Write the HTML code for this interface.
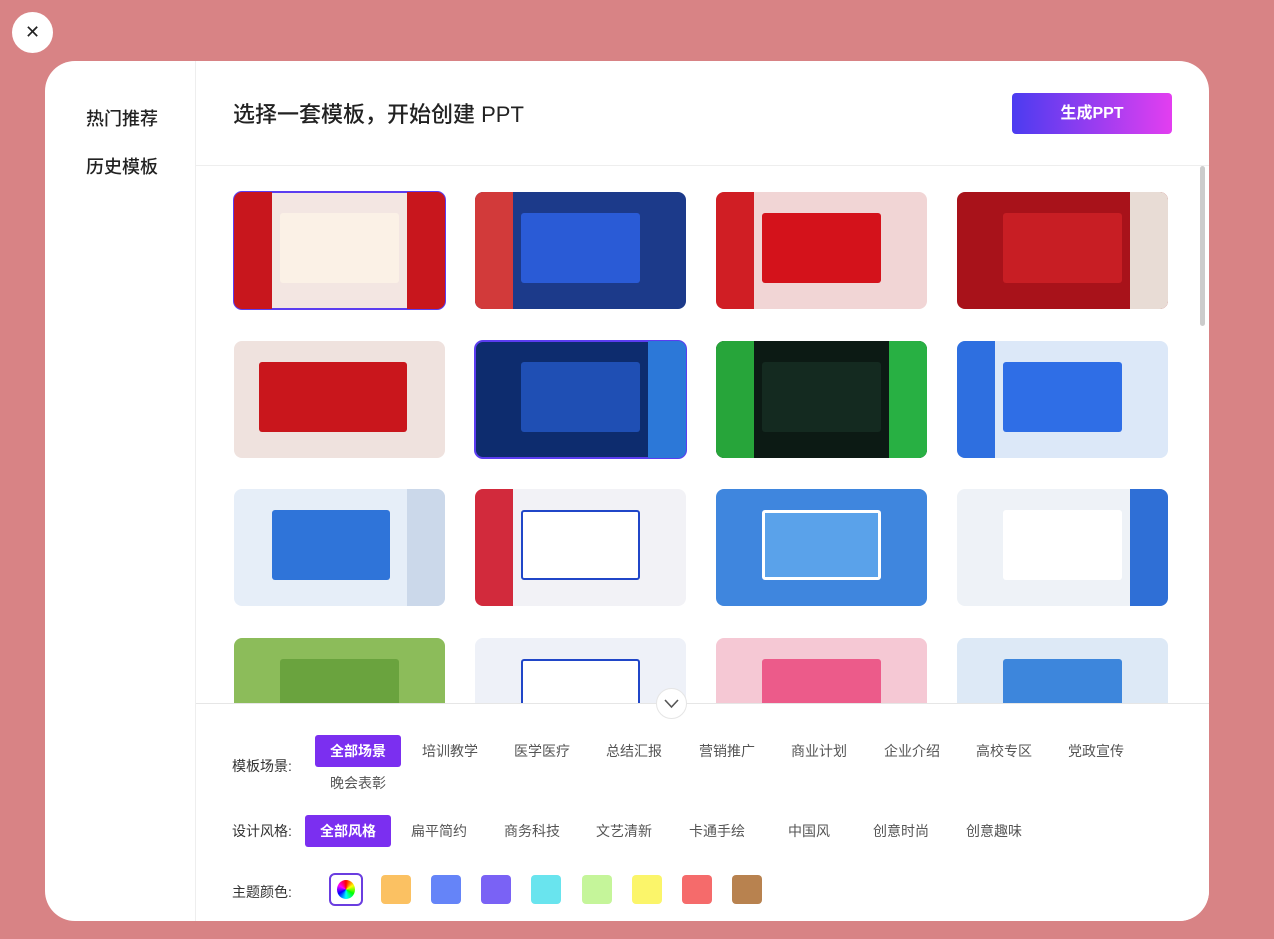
<!DOCTYPE html>
<html><head><meta charset="utf-8"><style>
*{margin:0;padding:0;box-sizing:border-box}
body{width:1274px;height:939px;background:#d88385;font-family:"Liberation Sans","Noto Sans CJK SC",sans-serif;position:relative;overflow:hidden}
.close{position:absolute;left:12px;top:12px;width:41px;height:41px;border-radius:50%;background:#fff;font-size:18px;text-align:center;line-height:41px;color:#222}
.modal{position:absolute;left:45px;top:61px;width:1164px;height:860px;background:#fff;border-radius:30px;overflow:hidden}
.side{position:absolute;left:0;top:0;width:151px;height:100%;border-right:1px solid #eee}
.side div{position:absolute;left:41px;font-size:18px;color:#222;font-weight:500}
.title{position:absolute;left:188px;top:36px;font-size:22px;color:#222;font-weight:500}
.btn{position:absolute;left:967px;top:32px;width:160px;height:41px;border-radius:4px;background:linear-gradient(90deg,#4b3cf0,#e33ef0);color:#fff;font-size:16px;font-weight:bold;text-align:center;line-height:41px}
.hr{position:absolute;left:151px;right:0;top:104px;border-top:1px solid #eee}
.grid{position:absolute;left:151px;top:105px;right:0;height:537px;overflow:hidden}
.t{position:absolute;width:211px;height:117px;border-radius:8px;overflow:hidden}
.t .c{position:absolute;left:22%;top:18%;width:56%;height:60%;border-radius:3px}
.t .s{position:absolute;left:0;top:0;width:18%;height:100%}
.t .s2{position:absolute;right:0;top:0;width:18%;height:100%}
.sel{outline:2px solid #5b3df0;outline-offset:-1px}
.scroll{position:absolute;left:1155px;top:105px;width:5px;height:160px;background:#ccc;border-radius:3px}
.panel{position:absolute;left:151px;top:642px;right:0;bottom:0;border-top:1px solid #e6e6e6;background:#fff}
.lbl{position:absolute;font-size:14px;color:#333}
.tag{position:absolute;font-size:14px;color:#555}
.on{background:#7b2ff0;color:#fff;border-radius:3px;text-align:center;font-weight:bold}
.sw{position:absolute;top:814px;width:30px;height:29px;border-radius:4px}
.down{position:absolute;left:656px;top:688px;width:31px;height:31px;border-radius:50%;background:#fff;border:1px solid #e5e5e5;z-index:3}
</style></head><body>
<div class="close">✕</div>
<div class="modal">
<div class="side"><div style="top:44px">热门推荐</div><div style="top:92px">历史模板</div></div>
<div class="title">选择一套模板，开始创建 PPT</div>
<div class="btn">生成PPT</div>
<div class="hr"></div>
<div class="grid">
<div class="t sel" style="left:38px;top:26px;background:#f3e6e2"><div class="s" style="background:#c8161d"></div><div class="s2" style="background:#c8161d"></div><div class="c" style="background:#fbf1e6"></div></div>
<div class="t" style="left:279px;top:26px;background:#1c3a8a"><div class="s" style="background:#d23a3a"></div><div class="c" style="background:#2a5bd6"></div></div>
<div class="t" style="left:520px;top:26px;background:#f1d5d5"><div class="s" style="background:#d01e24"></div><div class="c" style="background:#d4121b"></div></div>
<div class="t" style="left:761px;top:26px;background:#a8121a"><div class="c" style="background:#c81e24"></div><div class="s2" style="background:#e8dcd5"></div></div>
<div class="t" style="left:38px;top:175px;background:#efe2de"><div class="c" style="left:12%;width:70%;background:#c9161c"></div></div>
<div class="t sel" style="left:279px;top:175px;background:#0d2c6e"><div class="c" style="background:#1f4fb4"></div><div class="s2" style="background:#2c78d8"></div></div>
<div class="t" style="left:520px;top:175px;background:#0c1a14"><div class="s" style="background:#27a53a"></div><div class="c" style="background:#142a20"></div><div class="s2" style="background:#28b043"></div></div>
<div class="t" style="left:761px;top:175px;background:#dce8f8"><div class="s" style="background:#2e6fe0"></div><div class="c" style="background:#2f6ee6"></div></div>
<div class="t" style="left:38px;top:323px;background:#e6eef8"><div class="c" style="left:18%;background:#2f74d9"></div><div class="s2" style="background:#cbd8ea"></div></div>
<div class="t" style="left:279px;top:323px;background:#f2f2f6"><div class="c" style="background:#fff;border:2px solid #2046c8"></div><div class="s" style="background:#d22a3c"></div></div>
<div class="t" style="left:520px;top:323px;background:#3f86de"><div class="c" style="background:#5aa2ea;border:3px solid #fff"></div></div>
<div class="t" style="left:761px;top:323px;background:#eef2f7"><div class="c" style="background:#fff"></div><div class="s2" style="background:#2f6fd6"></div></div>
<div class="t" style="left:38px;top:472px;background:#8cbc5a"><div class="c" style="background:#6aa33e"></div></div>
<div class="t" style="left:279px;top:472px;background:#eef1f8"><div class="c" style="background:#fff;border:2px solid #2046c8"></div></div>
<div class="t" style="left:520px;top:472px;background:#f5c8d4"><div class="c" style="background:#ec5b8a"></div></div>
<div class="t" style="left:761px;top:472px;background:#dde9f6"><div class="c" style="background:#3d86dc"></div></div>
</div>
<div class="scroll"></div>
<div class="panel">
<div class="lbl" style="left:36px;top:52px">模板场景:</div>
<div class="tag on" style="left:119px;top:31px;width:86px;height:32px;line-height:32px">全部场景</div>
<div class="tag" style="left:226px;top:37px">培训教学</div>
<div class="tag" style="left:318px;top:37px">医学医疗</div>
<div class="tag" style="left:410px;top:37px">总结汇报</div>
<div class="tag" style="left:503px;top:37px">营销推广</div>
<div class="tag" style="left:595px;top:37px">商业计划</div>
<div class="tag" style="left:688px;top:37px">企业介绍</div>
<div class="tag" style="left:780px;top:37px">高校专区</div>
<div class="tag" style="left:872px;top:37px">党政宣传</div>
<div class="tag" style="left:134px;top:69px">晚会表彰</div>
<div class="lbl" style="left:36px;top:117px">设计风格:</div>
<div class="tag on" style="left:109px;top:111px;width:86px;height:32px;line-height:32px">全部风格</div>
<div class="tag" style="left:215px;top:117px">扁平简约</div>
<div class="tag" style="left:308px;top:117px">商务科技</div>
<div class="tag" style="left:400px;top:117px">文艺清新</div>
<div class="tag" style="left:493px;top:117px">卡通手绘</div>
<div class="tag" style="left:592px;top:117px">中国风</div>
<div class="tag" style="left:677px;top:117px">创意时尚</div>
<div class="tag" style="left:770px;top:117px">创意趣味</div>
<div class="lbl" style="left:36px;top:178px">主题颜色:</div>
</div>
</div>
<div class="down"><svg width="29" height="29" viewBox="0 0 29 29"><path d="M8 11l6.5 7 6.5-7" fill="none" stroke="#555" stroke-width="1.6"/></svg></div>
<div class="sw" style="left:329px;top:873px;width:34px;height:33px;border:2px solid #6a3de0;border-radius:6px;background:#fff"><div style="position:absolute;left:6px;top:5px;width:18px;height:19px;border-radius:50%;background:conic-gradient(red,yellow,lime,cyan,blue,magenta,red)"></div></div>
<div class="sw" style="left:381px;top:875px;background:#fbc162"></div>
<div class="sw" style="left:431px;top:875px;background:#6584f8"></div>
<div class="sw" style="left:481px;top:875px;background:#7a62f5"></div>
<div class="sw" style="left:531px;top:875px;background:#69e4ee"></div>
<div class="sw" style="left:582px;top:875px;background:#c5f59a"></div>
<div class="sw" style="left:632px;top:875px;background:#fbf56a"></div>
<div class="sw" style="left:682px;top:875px;background:#f56b6b"></div>
<div class="sw" style="left:732px;top:875px;background:#b8824f"></div>
</body></html>
